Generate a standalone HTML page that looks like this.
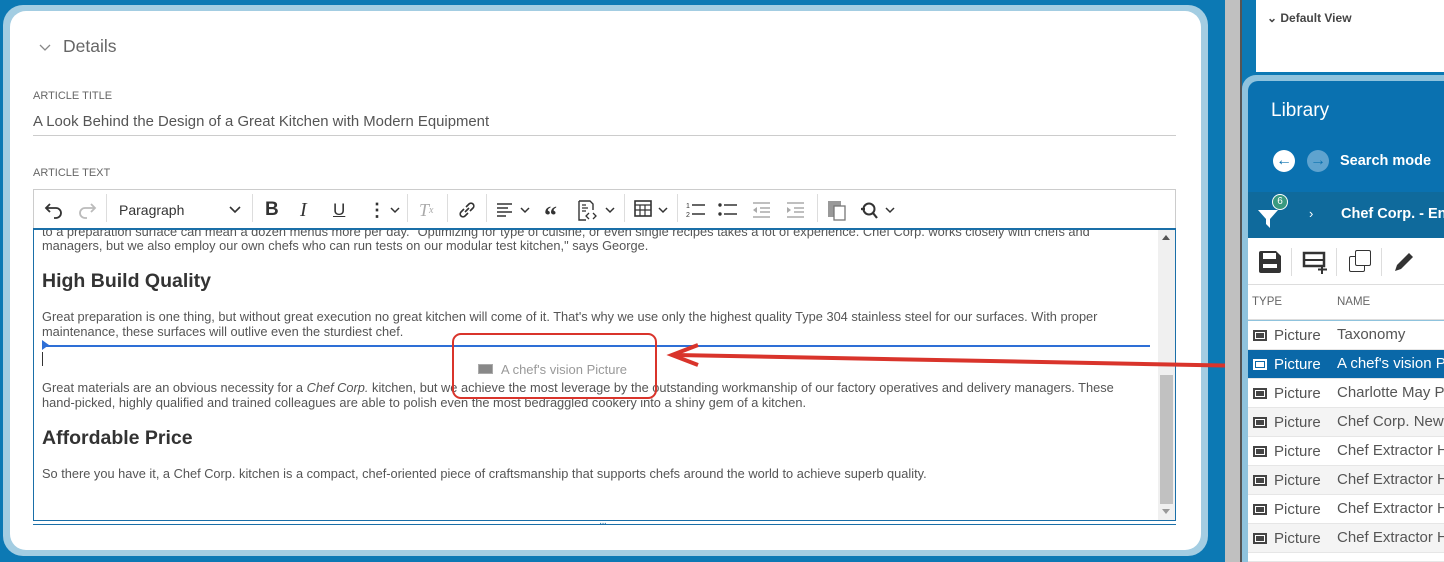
<!DOCTYPE html>
<html><head><style>
*{box-sizing:border-box;margin:0;padding:0}
html{width:1444px;height:562px;overflow:hidden}
body{width:1444px;height:562px;overflow:hidden;background:#0c79b4;font-family:"Liberation Sans",sans-serif;position:relative;color:#444}
.abs{position:absolute}
.tb{position:absolute;top:0;height:40px;display:flex;align-items:center;font-size:18px;color:#333}
.sep{position:absolute;top:4px;width:1px;height:32px;background:#ddd}
p.t{font-size:12.8px;line-height:16px;color:#555;position:absolute;left:42px;white-space:nowrap}
h3{position:absolute;left:42px;font-size:19.5px;color:#333;font-weight:bold}
.row{position:absolute;left:1248px;width:196px;height:29px;border-bottom:1px solid #e6e6e6;font-size:15px;color:#555;background:#fff}
.row.alt{background:#f4f4f4}
.row .ic{position:absolute;left:5px;top:9px;width:14px;height:11px;border:2px solid #444;background:#444;box-shadow:inset 0 0 0 1px #fff}
.row .ty{position:absolute;left:26px;top:6px}
.row .nm{position:absolute;left:89px;top:5px;white-space:nowrap}
svg.i{position:absolute;top:10px}
</style></head><body>
<div class="abs" style="left:3px;top:5px;width:1205px;height:551px;background:#a3cde2;border-radius:20px"></div>
<div class="abs" style="left:10px;top:11px;width:1191px;height:539px;background:#fff;border-radius:16px"></div>
<svg class="abs" style="left:38px;top:43px" width="14" height="10"><polyline points="2,2 7,7 12,2" fill="none" stroke="#888" stroke-width="1.3"/></svg>
<div class="abs" style="left:63px;top:36px;font-size:17.5px;color:#666">Details</div>
<div class="abs" style="left:33px;top:90px;font-size:11px;color:#666">ARTICLE TITLE</div>
<div class="abs" style="left:33px;top:114px;font-size:14.9px;color:#555">A Look Behind the Design of a Great Kitchen with Modern Equipment</div>
<div class="abs" style="left:33px;top:135px;width:1143px;height:1px;background:#ccc"></div>
<div class="abs" style="left:33px;top:167px;font-size:11px;color:#666">ARTICLE TEXT</div>
<div class="abs" style="left:33px;top:189px;width:1143px;height:335px;border:1px solid #ccc;background:#fff">
 <svg class="i" style="left:10px" width="20" height="20"><path d="M6 4 L2 8 L6 12 M2 8 H12 a5 5 0 0 1 0 10 H10" fill="none" stroke="#333" stroke-width="1.8"/></svg>
 <svg class="i" style="left:43px" width="20" height="20"><path d="M14 4 L18 8 L14 12 M18 8 H8 a5 5 0 0 0 0 10 H10" fill="none" stroke="#bbb" stroke-width="1.8"/></svg>
 <div class="sep" style="left:72px"></div>
 <div class="tb" style="left:85px;font-size:14px">Paragraph</div>
 <svg class="i" style="left:195px;top:16px" width="12" height="8"><polyline points="1,1 6,6 11,1" fill="none" stroke="#333" stroke-width="1.6"/></svg>
 <div class="sep" style="left:218px"></div>
 <div class="tb" style="left:231px;font-weight:bold;font-size:19px">B</div>
 <div class="tb" style="left:266px;font-style:italic;font-family:'Liberation Serif';font-size:20px">I</div>
 <div class="tb" style="left:299px;text-decoration:underline;font-size:17px">U</div>
 <div class="tb" style="left:334px;font-weight:bold">&#8942;</div>
 <svg class="i" style="left:356px;top:17px" width="10" height="7"><polyline points="1,1 5,5 9,1" fill="none" stroke="#333" stroke-width="1.5"/></svg>
 <div class="sep" style="left:373px"></div>
 <div class="tb" style="left:385px;color:#aaa;font-style:italic;font-family:'Liberation Serif'">T<span style="font-size:10px">x</span></div>
 <div class="sep" style="left:413px"></div>
 <svg class="i" style="left:423px" width="20" height="20"><path d="M8 12 L12 8 M7 9 L4 12 a2.8 2.8 0 0 0 4 4 L11 13 M9 7 L12 4 a2.8 2.8 0 0 1 4 4 L13 11" fill="none" stroke="#333" stroke-width="1.6"/></svg>
 <div class="sep" style="left:452px"></div>
 <svg class="i" style="left:462px" width="18" height="20"><path d="M1 4H16M1 8H12M1 12H16M1 16H10" stroke="#333" stroke-width="1.6"/></svg>
 <svg class="i" style="left:486px;top:17px" width="10" height="7"><polyline points="1,1 5,5 9,1" fill="none" stroke="#333" stroke-width="1.5"/></svg>
 <div class="tb" style="left:510px;font-weight:bold;font-size:26px;top:6px;font-family:'Liberation Serif'">&#8220;</div>
 <svg class="i" style="left:543px" width="22" height="22"><path d="M2 1H13L16 4V10M2 1V20H9" fill="none" stroke="#333" stroke-width="1.4"/><path d="M5 5H9M5 8H11M5 11H9M12 13L9 16L12 19M16 13L19 16L16 19" fill="none" stroke="#333" stroke-width="1.3"/></svg>
 <svg class="i" style="left:571px;top:17px" width="10" height="7"><polyline points="1,1 5,5 9,1" fill="none" stroke="#333" stroke-width="1.5"/></svg>
 <div class="sep" style="left:590px"></div>
 <svg class="i" style="left:600px" width="18" height="18"><rect x="1" y="1" width="16" height="15" fill="none" stroke="#333" stroke-width="1.6"/><path d="M1 5H17M1 10H17M6 5V16M11 5V16" stroke="#333" stroke-width="1.2"/></svg>
 <svg class="i" style="left:624px;top:17px" width="10" height="7"><polyline points="1,1 5,5 9,1" fill="none" stroke="#333" stroke-width="1.5"/></svg>
 <div class="sep" style="left:643px"></div>
 <svg class="i" style="left:652px" width="20" height="20"><text x="0" y="8" font-size="7" fill="#333">1</text><text x="0" y="17" font-size="7" fill="#333">2</text><path d="M6 5H19M6 14H19" stroke="#333" stroke-width="1.6"/></svg>
 <svg class="i" style="left:684px" width="20" height="20"><circle cx="2" cy="5" r="1.7" fill="#333"/><circle cx="2" cy="14" r="1.7" fill="#333"/><path d="M6 5H19M6 14H19" stroke="#333" stroke-width="1.6"/></svg>
 <svg class="i" style="left:718px" width="20" height="20"><path d="M1 3H18M8 8H18M8 12H18M1 17H18" stroke="#aaa" stroke-width="1.4"/><path d="M5 7L1 10L5 13" fill="#aaa"/></svg>
 <svg class="i" style="left:752px" width="20" height="20"><path d="M1 3H18M8 8H18M8 12H18M1 17H18" stroke="#aaa" stroke-width="1.4"/><path d="M1 7L5 10L1 13" fill="#aaa"/></svg>
 <div class="sep" style="left:783px"></div>
 <svg class="i" style="left:793px" width="20" height="22"><rect x="1" y="1" width="13" height="16" fill="#999"/><rect x="7" y="6" width="11" height="14" fill="#fff" stroke="#777" stroke-width="1.3"/></svg>
 <svg class="i" style="left:825px" width="22" height="22"><circle cx="10" cy="9" r="5.5" fill="none" stroke="#333" stroke-width="2"/><path d="M14 13L18 18M2 9H6" stroke="#333" stroke-width="2.2"/></svg>
 <svg class="i" style="left:851px;top:17px" width="10" height="7"><polyline points="1,1 5,5 9,1" fill="none" stroke="#333" stroke-width="1.5"/></svg>
</div>
<p class="t" style="top:224px">to a preparation surface can mean a dozen menus more per day. "Optimizing for type of cuisine, or even single recipes takes a lot of experience. Chef Corp. works closely with chefs and</p>
<div class="abs" style="left:34px;top:222px;width:1124px;height:8px;background:#fff"></div>
<div class="abs" style="left:33px;top:228px;width:1143px;height:2px;background:#1a6fa8"></div>
<p class="t" style="top:238px">managers, but we also employ our own chefs who can run tests on our modular test kitchen," says George.</p>
<h3 style="top:270px">High Build Quality</h3>
<p class="t" style="top:309px">Great preparation is one thing, but without great execution no great kitchen will come of it. That's why we use only the highest quality Type 304 stainless steel for our surfaces. With proper</p>
<p class="t" style="top:324px">maintenance, these surfaces will outlive even the sturdiest chef.</p>
<div class="abs" style="left:42px;top:345px;width:1108px;height:2px;background:#2e6fd6"></div>
<div class="abs" style="left:42px;top:340px;width:0;height:0;border-top:5px solid transparent;border-bottom:5px solid transparent;border-left:7px solid #2e6fd6"></div>
<div class="abs" style="left:42px;top:352px;width:1px;height:14px;background:#333"></div>
<div class="abs" style="left:478px;top:364px;width:15px;height:10px;background:#888;border:1px solid #aaa"></div>
<div class="abs" style="left:501px;top:362px;font-size:13px;color:#999">A chef's vision Picture</div>
<p class="t" style="top:380px">Great materials are an obvious necessity for a <i>Chef Corp.</i> kitchen, but we achieve the most leverage by the outstanding workmanship of our factory operatives and delivery managers. These</p>
<p class="t" style="top:395px">hand-picked, highly qualified and trained colleagues are able to polish even the most bedraggled cookery into a shiny gem of a kitchen.</p>
<h3 style="top:427px">Affordable Price</h3>
<p class="t" style="top:466px">So there you have it, a Chef Corp. kitchen is a compact, chef-oriented piece of craftsmanship that supports chefs around the world to achieve superb quality.</p>
<div class="abs" style="left:1158px;top:230px;width:17px;height:290px;background:#f0f0f0"></div>
<div class="abs" style="left:1160px;top:375px;width:13px;height:129px;background:#c1c1c1"></div>
<div class="abs" style="left:1162px;top:235px;border-left:4px solid transparent;border-right:4px solid transparent;border-bottom:5px solid #555"></div>
<div class="abs" style="left:1162px;top:509px;border-left:4px solid transparent;border-right:4px solid transparent;border-top:5px solid #999"></div>
<div class="abs" style="left:1175px;top:229px;width:1px;height:291px;background:#1a6fa8"></div>
<div class="abs" style="left:33px;top:229px;width:1px;height:291px;background:#1a6fa8"></div>
<div class="abs" style="left:33px;top:520px;width:1143px;height:5px;border-top:1px solid #1a6fa8;border-bottom:1px solid #1a6fa8;background:#fff"></div>
<div class="abs" style="left:599px;top:518px;font-size:10px;color:#1a6fa8;letter-spacing:-1px">···</div>
<div class="abs" style="left:452px;top:333px;width:205px;height:66px;border:2.5px solid #d9342b;border-radius:9px"></div>
<svg class="abs" style="left:660px;top:340px" width="600" height="40"><line x1="16" y1="15" x2="590" y2="26" stroke="#d9342b" stroke-width="4"/><polyline points="38,5 12,15 38,25" fill="none" stroke="#d9342b" stroke-width="4"/></svg>
<div class="abs" style="left:1225px;top:0;width:15px;height:562px;background:#c0c0c0"></div>
<div class="abs" style="left:1240px;top:0;width:2px;height:562px;background:#555"></div>
<div class="abs" style="left:1242px;top:0;width:14px;height:562px;background:#0c79b4"></div>
<div class="abs" style="left:1256px;top:0;width:188px;height:72px;background:#fff"></div>
<div class="abs" style="left:1267px;top:11px;font-size:12px;font-weight:bold;color:#444">&#8964; Default View</div>
<div class="abs" style="left:1242px;top:75px;width:210px;height:490px;background:#8fc3dd;border-radius:14px 0 0 0"></div>
<div class="abs" style="left:1248px;top:81px;width:196px;height:111px;background:#0a71b0;border-radius:10px 0 0 0"></div>
<div class="abs" style="left:1271px;top:100px;font-size:19px;color:#fff">Library</div>
<div class="abs" style="left:1273px;top:150px;width:22px;height:22px;border-radius:50%;background:#fff;color:#0a71b0;font-weight:bold;text-align:center;line-height:22px;font-size:16px">&#8592;</div>
<div class="abs" style="left:1307px;top:150px;width:22px;height:22px;border-radius:50%;background:#5fa3cf;color:#0a71b0;font-weight:bold;text-align:center;line-height:22px;font-size:16px">&#8594;</div>
<div class="abs" style="left:1340px;top:153px;font-size:14.5px;color:#fff;font-weight:bold">Search mode</div>
<div class="abs" style="left:1248px;top:192px;width:196px;height:46px;background:#0f6a9c"></div>
<svg class="abs" style="left:1256px;top:200px" width="30" height="30"><polygon points="2,10 22,10 14,19 14,28 10,24 10,19" fill="#fff"/></svg>
<div class="abs" style="left:1272px;top:194px;width:16px;height:16px;border-radius:50%;background:#3a9a80;border:1px solid #fff;color:#fff;font-size:10px;text-align:center;line-height:14px">6</div>
<div class="abs" style="left:1309px;top:206px;font-size:13px;color:#fff">›</div>
<div class="abs" style="left:1341px;top:206px;font-size:14.5px;color:#fff;font-weight:bold;white-space:nowrap">Chef Corp. - Eng</div>
<div class="abs" style="left:1248px;top:238px;width:196px;height:47px;background:#fff;border-bottom:1px solid #ddd"></div>
<svg class="abs" style="left:1258px;top:250px" width="24" height="24"><path d="M1 3a2 2 0 0 1 2-2H18L23 6V21a2 2 0 0 1-2 2H3a2 2 0 0 1-2-2Z" fill="#333"/><rect x="5" y="3" width="13" height="6" fill="#fff"/><rect x="5" y="14" width="14" height="4" fill="#fff"/></svg>
<div class="abs" style="left:1291px;top:248px;width:1px;height:28px;background:#ddd"></div>
<svg class="abs" style="left:1302px;top:250px" width="28" height="24"><rect x="2" y="3" width="20" height="13" fill="none" stroke="#333" stroke-width="2.5"/><path d="M2 10H22" stroke="#333" stroke-width="2"/><path d="M20 15V24M16 19.5H25" stroke="#333" stroke-width="2"/></svg>
<div class="abs" style="left:1336px;top:248px;width:1px;height:28px;background:#ddd"></div>
<div class="abs" style="left:1349px;top:256px;width:16px;height:16px;border:1.5px solid #333;background:#fff;border-radius:2px"></div>
<div class="abs" style="left:1355px;top:250px;width:16px;height:16px;border:1.5px solid #333;background:#fff;border-radius:2px"></div>
<div class="abs" style="left:1381px;top:248px;width:1px;height:28px;background:#ddd"></div>
<svg class="abs" style="left:1392px;top:250px" width="24" height="24"><path d="M3 21L5 15L17 3L21 7L9 19Z" fill="#333"/></svg>
<div class="abs" style="left:1248px;top:285px;width:196px;height:35px;background:#fff;border-bottom:1px solid #ddd"></div>
<div class="abs" style="left:1252px;top:296px;font-size:11.5px;color:#666">TYPE</div>
<div class="abs" style="left:1337px;top:296px;font-size:11.5px;color:#666">NAME</div>
<div class="row" style="top:321px"><div class="ic"></div><div class="ty">Picture</div><div class="nm">Taxonomy</div></div>
<div class="row" style="top:350px;background:#0a68a8;color:#fff"><div class="ic" style="border-color:#fff;background:#fff;box-shadow:inset 0 0 0 1px #0a68a8;"></div><div class="ty">Picture</div><div class="nm">A chef's vision P</div></div>
<div class="row" style="top:379px"><div class="ic"></div><div class="ty">Picture</div><div class="nm">Charlotte May Pi</div></div>
<div class="row alt" style="top:408px"><div class="ic"></div><div class="ty">Picture</div><div class="nm">Chef Corp. New</div></div>
<div class="row" style="top:437px"><div class="ic"></div><div class="ty">Picture</div><div class="nm">Chef Extractor H</div></div>
<div class="row alt" style="top:466px"><div class="ic"></div><div class="ty">Picture</div><div class="nm">Chef Extractor H</div></div>
<div class="row" style="top:495px"><div class="ic"></div><div class="ty">Picture</div><div class="nm">Chef Extractor H</div></div>
<div class="row alt" style="top:524px"><div class="ic"></div><div class="ty">Picture</div><div class="nm">Chef Extractor H</div></div>
<div class="row" style="top:553px;height:9px"></div>
</body></html>
